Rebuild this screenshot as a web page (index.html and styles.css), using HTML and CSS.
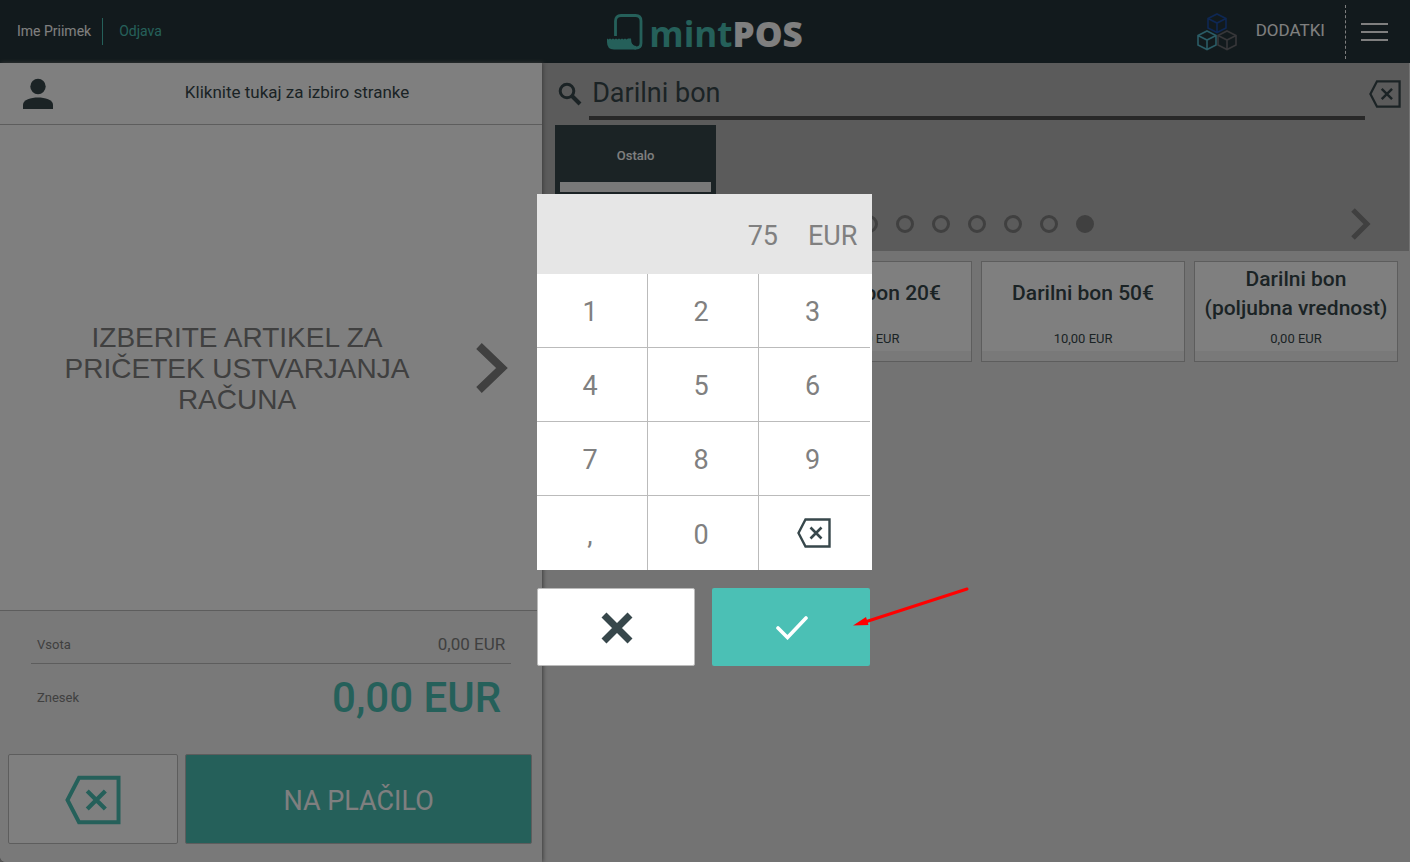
FILE: index.html
```html
<!DOCTYPE html>
<html lang="sl">
<head>
<meta charset="utf-8">
<title>mintPOS</title>
<link rel="stylesheet" href="styles.css">
</head>
<body>
<svg class="sprite" aria-hidden="true">
  <symbol id="backspace" viewBox="0 0 34 30"><path d="M8.500 1.500H32.500V28.500H8.500L1.500 15Z" fill="none" stroke="currentColor" stroke-width="2.400"/><path d="M13.500 9.500L24.500 20.500M24.500 9.500L13.500 20.500" fill="none" stroke="currentColor" stroke-width="2.600"/></symbol>
  <symbol id="chevron" viewBox="0 0 32 50"><path d="M3 3L26 25L3 47" fill="none" stroke="currentColor" stroke-width="8"/></symbol>
</svg>
<div class="page">
  <header class="topbar">
    <div class="user">
      <span class="user-name">Ime Priimek</span>
      <a class="logout" href="#">Odjava</a>
    </div>
    <div class="logo">
      <svg class="logo-mark" viewBox="0 0 36 36" aria-hidden="true">
        <path d="M8.500 22V7Q8.500 1.500 14 1.500H28.500Q34 1.500 34 7V29Q34 34 29 34Q26 34 24 31" fill="none" stroke="currentColor" stroke-width="2.800"/>
        <path d="M0 24.500l1.500 1 1.500-1 1.500 1 1.500-1 1.500 1 1.500-1 1.500 1 1.500-1 1.500 1 1.500-1 1.500 1 1.500-1 1.500 1 1.500-1H24Q24 32 29 32V35.500H7Q0 35.500 0 28Z" fill="currentColor"/>
      </svg>
      <span class="logo-text">mint<b>POS</b></span>
    </div>
    <nav class="tools">
      <a class="addons" href="#">
        <svg class="cubes" viewBox="0 0 40 38" fill="none" stroke-width="1.600" aria-hidden="true">
          <path d="M20 1L29 5.500V15L20 19.500L11 15V5.500ZM11 5.500L20 10L29 5.500M20 10V19.500" stroke="#1c4fa8"/>
          <path d="M30 18L39 22.500V32L30 36.500L21 32V22.500ZM21 22.500L30 27L39 22.500M30 27V36.500" stroke="#6d6d72"/>
          <path d="M10 18L19 22.500V32L10 36.500L1 32V22.500ZM1 22.500L10 27L19 22.500M10 27V36.500" stroke="#55b8cc"/>
        </svg>
        <span>DODATKI</span>
      </a>
      <button class="menu" aria-label="Meni"><i></i><i></i><i></i></button>
    </nav>
  </header>

  <main class="workspace">
    <section class="receipt">
      <button class="customer">
        <svg class="person" viewBox="0 0 32 32" aria-hidden="true"><circle cx="16" cy="8.500" r="7.700" fill="currentColor"/><path d="M1 31V26.500C1 22 9 19.500 16 19.500S31 22 31 26.500V31Z" fill="currentColor"/></svg>
        <span>Kliknite tukaj za izbiro stranke</span>
      </button>
      <div class="empty">
        <p>IZBERITE ARTIKEL ZA PRIČETEK USTVARJANJA RAČUNA</p>
        <svg class="empty-arrow" aria-hidden="true"><use href="#chevron"/></svg>
      </div>
      <div class="summary">
        <dl class="totals">
          <div class="subtotal"><dt>Vsota</dt><dd>0,00 EUR</dd></div>
          <div class="total"><dt>Znesek</dt><dd>0,00 EUR</dd></div>
        </dl>
        <div class="receipt-actions">
          <button class="clear" aria-label="Počisti"><svg aria-hidden="true"><use href="#backspace"/></svg></button>
          <button class="pay">NA PLAČILO</button>
        </div>
      </div>
    </section>

    <section class="catalog">
      <div class="browse">
        <div class="search">
          <svg class="search-icon" viewBox="0 0 24 24" aria-label="Iskanje"><circle cx="9" cy="9" r="6.800" fill="none" stroke="currentColor" stroke-width="3"/><path d="M14 14L22 22" stroke="currentColor" stroke-width="4"/></svg>
          <input type="text" value="Darilni bon" aria-label="Iskanje">
          <button class="search-clear" aria-label="Izbriši iskanje"><svg aria-hidden="true"><use href="#backspace"/></svg></button>
        </div>
        <button class="category">Ostalo</button>
        <div class="pager">
          <div class="dots"><i></i><i></i><i></i><i></i><i></i><i></i><i class="on"></i></div>
          <button class="next" aria-label="Naprej"><svg viewBox="0 0 20 32" aria-hidden="true"><path d="M2 2L16 16L2 30" fill="none" stroke="currentColor" stroke-width="5"/></svg></button>
        </div>
      </div>
      <div class="products">
        <button class="product first"><span class="product-name">Darilni bon 20€</span><span class="price">10,00 EUR</span></button>
        <button class="product"><span class="product-name">Darilni bon 50€</span><span class="price">10,00 EUR</span></button>
        <button class="product"><span class="product-name">Darilni bon (poljubna vrednost)</span><span class="price">0,00 EUR</span></button>
      </div>
    </section>
  </main>
</div>

<div class="overlay">
  <div class="dialog" role="dialog" aria-label="Vrednost">
    <div class="keypad">
      <output class="amount"><span>75</span><span>EUR</span></output>
      <div class="keys">
        <button>1</button><button>2</button><button>3</button>
        <button>4</button><button>5</button><button>6</button>
        <button>7</button><button>8</button><button>9</button>
        <button>,</button><button>0</button><button class="erase" aria-label="Izbriši"><svg aria-hidden="true"><use href="#backspace"/></svg></button>
      </div>
    </div>
    <div class="dialog-actions">
      <button class="cancel" aria-label="Prekliči"><svg viewBox="0 0 32 32" aria-hidden="true"><path d="M3 3L29 29M29 3L3 29" stroke="currentColor" stroke-width="7"/></svg></button>
      <button class="confirm" aria-label="Potrdi"><svg viewBox="0 0 32 24" aria-hidden="true"><path d="M2 12L11.500 21.500L30 2" fill="none" stroke="currentColor" stroke-width="3.600" stroke-linecap="round"/></svg></button>
      <svg class="pointer" viewBox="0 0 116 42" aria-hidden="true"><path d="M12 35L114 2" stroke="#f00" stroke-width="3" stroke-linecap="round"/><path d="M0 38.500L13 30L15.500 38Z" fill="#f00"/></svg>
    </div>
  </div>
</div>
</body>
</html>
```
FILE: styles.css
```css
* { box-sizing: border-box; }
body {
  margin: 0;
  font-family: Roboto, "Noto Sans", sans-serif;
  color: #37474b;
  background: #b6b6b6;
}
button {
  font: inherit;
  color: inherit;
  margin: 0;
  padding: 0;
  border: 0;
  background: none;
}
a { color: inherit; text-decoration: none; }
svg { display: block; flex: none; }
.sprite { position: absolute; width: 0; height: 0; }

.page { display: flex; flex-direction: column; min-height: 100vh; }

/* Top bar */
.topbar {
  display: grid;
  grid-template-columns: 1fr auto 1fr;
  align-items: center;
  height: 63px;
  background: #25353a;
  color: #fff;
}
.user { display: flex; align-items: center; padding-left: 17px; font-size: 14px; line-height: 27px; }
.user-name { padding-right: 11px; border-right: 1px solid #4bc0b5; }
.logout { padding-left: 16px; color: #4bc0b5; }
.logo { display: flex; align-items: center; gap: 6px; color: #4bc0b5; }
.logo-mark { width: 36px; height: 36px; }
.logo-text { font: 700 35px/48px "Open Sans", sans-serif; padding-top: 5px; }
.logo-text b { color: #fff; }
.tools { display: flex; justify-content: flex-end; align-items: center; height: 100%; }
.addons { display: flex; align-items: center; gap: 19px; font-size: 17px; }
.addons span { padding-bottom: 3px; }
.cubes { width: 40px; height: 38px; }
.menu {
  display: grid;
  gap: 6px;
  align-content: center;
  height: 54px;
  margin-left: 20px;
  padding: 0 22px 0 15px;
  border-left: 1px dashed #fff;
}
.menu i { width: 27px; height: 2px; background: #fff; }

.workspace { flex: 1; display: flex; }

/* Receipt */
.receipt {
  position: relative;
  flex: 0 0 38.45%;
  display: flex;
  flex-direction: column;
  background: #fff;
  border-bottom-left-radius: 6px;
  box-shadow: 1px 0 4px #777;
}
.customer {
  display: flex;
  align-items: center;
  height: 62px;
  padding: 0 22px;
  border-bottom: 1px solid #bbb;
  font-size: 17px;
}
.customer span { flex: 1; padding: 0 0 4px 20px; }
.person { width: 32px; height: 32px; }
.empty {
  flex: 1;
  display: flex;
  align-items: center;
  justify-content: space-between;
  padding: 0 34px 0 54px;
  font: 28px/31px "Liberation Sans", Arial, sans-serif;
  color: #808080;
}
.empty p { flex: 0 1 366px; margin: 0; padding-top: 2px; text-align: center; }
.empty-arrow { width: 32px; height: 50px; }
.summary {
  padding: 0 10px 18px 8px;
  border-top: 1px solid #bbb;
  border-bottom-left-radius: 6px;
  background: #f2f2f2;
}
.totals { margin: 0; padding: 0 21px 0 23px; color: #808080; font-size: 13px; }
.totals div { display: flex; justify-content: space-between; align-items: center; }
.totals dd { margin: 0; }
.subtotal { height: 53px; padding: 14px 6px 0; border-bottom: 1px solid #bbb; }
.subtotal dd { font-size: 17px; }
.total { height: 90px; padding: 0 10px 24px 6px; }
.total dd { font-size: 42px; font-weight: 500; color: #4bc0b5; }
.receipt-actions { display: grid; grid-template-columns: 170px 1fr; gap: 7px; height: 90px; }
.receipt-actions button { padding-top: 3px; border: 1px solid #bbb; border-radius: 2px; }
.receipt-actions .clear { display: grid; place-items: center; padding-top: 1px; background: #fff; color: #4bc0b5; }
.clear svg { width: 56px; height: 50px; }
.receipt-actions .pay { background: #4bc0b5; color: #fff; font-size: 27px; }

/* Catalog */
.catalog { flex: 1; min-width: 0; background: #e6e6e6; }
.browse { padding-left: 13px; margin-right: 1px; background: #b6b6b6; }
.search { display: flex; align-items: flex-start; height: 62px; padding: 0 8px 0 3px; }
.search-icon { width: 24px; height: 24px; margin: 19px 7px 0 0; }
.search input {
  flex: 1;
  min-width: 0;
  height: 57px;
  padding: 7px 3px 0;
  border: 0;
  border-bottom: 4px solid #505050;
  border-radius: 0;
  background: none;
  color: inherit;
  font: 27px Roboto, sans-serif;
}
.search-clear { margin: 16px 0 0 4px; }
.search-clear svg { width: 32px; height: 30px; }
.category {
  display: block;
  width: 161px;
  height: 72px;
  padding-bottom: 11px;
  border: 5px solid #37474b;
  background: #37474b;
  box-shadow: inset 0 -10px #f2f2f2;
  color: #fff;
  font-size: 13px;
  font-weight: 500;
}
.pager {
  display: grid;
  grid-template-columns: 1fr auto 1fr;
  align-items: center;
  height: 54px;
  padding-right: 10px;
}
.dots { grid-column: 2; display: flex; gap: 18px; }
.dots i { width: 18px; height: 18px; border: 3px solid #808080; border-radius: 50%; }
.dots .on { background: #808080; }
.next { justify-self: end; margin-right: 28px; color: #808080; }
.next svg { width: 20px; height: 32px; }
.products {
  display: grid;
  grid-template-columns: repeat(4, 1fr);
  gap: 9px;
  padding: 10px 12px 10px 13px;
}
.product {
  display: flex;
  flex-direction: column;
  height: 101px;
  padding-bottom: 10px;
  border: 1px solid #bbb;
  background: #fff;
  box-shadow: inset 0 -10px #f2f2f2;
}
.product.first { grid-column-start: 2; }
.product-name {
  flex: 1;
  display: grid;
  place-items: center;
  width: 100%;
  padding: 0 6px 2px;
  font-size: 21px;
  line-height: 29px;
  font-weight: 500;
}
.price { width: 100%; font-size: 13px; line-height: 24px; }

/* Amount dialog */
.overlay {
  position: fixed;
  inset: 0;
  display: grid;
  place-items: center;
  padding-right: 2px;
  background: rgba(0, 0, 0, 0.5);
}
.dialog { width: 335px; padding-bottom: 2px; }
.keypad { background: #fff; color: #808080; font-size: 27px; }
.amount {
  display: flex;
  justify-content: flex-end;
  align-items: center;
  gap: 30px;
  height: 80px;
  padding: 4px 14px 0;
  background: #e6e6e6;
}
.keys { display: grid; grid-template-columns: repeat(3, 111px); grid-auto-rows: 74px; }
.keys button { border: solid #bbb; border-width: 0 1px 1px 0; padding: 3px 3px 0 0; }
.keys button:nth-child(3n) { border-right: 0; }
.keys button:nth-child(n + 10) { border-bottom: 0; }
.keys .erase { display: grid; place-items: center; padding: 0; color: #37474b; }
.erase svg { width: 34px; height: 30px; }
.dialog-actions {
  position: relative;
  display: grid;
  grid-template-columns: 1fr 1fr;
  gap: 17px;
  height: 78px;
  margin: 18px 2px 0 0;
}
.dialog-actions button { display: grid; place-items: center; padding: 2px 0 0 2px; border-radius: 2px; }
.dialog-actions .cancel { background: #fff; border: 1px solid #bbb; }
.cancel svg { width: 32px; height: 32px; }
.confirm { background: #4bc0b5; color: #fff; }
.confirm svg { width: 32px; height: 24px; }
.pointer { position: absolute; left: 316px; top: -1px; width: 116px; height: 42px; }
```
